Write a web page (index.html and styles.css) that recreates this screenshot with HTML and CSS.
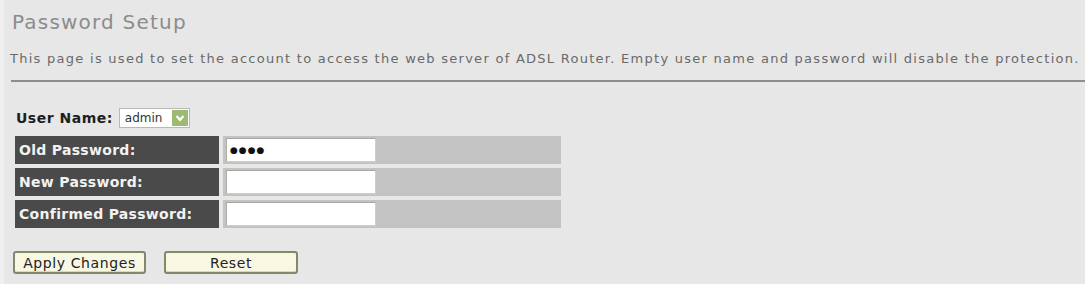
FILE: index.html
```html
<!DOCTYPE html>
<html>
<head>
<meta charset="utf-8">
<link rel="stylesheet" href="styles.css">
</head>
<body>
<div class="page">
  <h1 class="title">Password Setup</h1>
  <p class="desc">This page is used to set the account to access the web server of ADSL Router. Empty user name and password will disable the protection.</p>
  <div class="rule"></div>
  <div class="user-row">
    <span class="user-label">User Name:</span>
    <span class="select"><span class="select-text">admin</span><span class="arrow"><svg width="14" height="14" viewBox="0 0 14 14"><path d="M3.5 5 L7 8.8 L10.5 5" fill="none" stroke="#ffffff" stroke-width="2.2"/></svg></span></span>
  </div>
  <table class="form">
    <tr><td class="label">Old Password:</td><td class="field"><span class="input dots">&#9679;&#9679;&#9679;&#9679;</span></td></tr>
    <tr><td class="label">New Password:</td><td class="field"><span class="input"></span></td></tr>
    <tr><td class="label">Confirmed Password:</td><td class="field"><span class="input"></span></td></tr>
  </table>
  <div class="buttons">
    <button class="btn apply">Apply Changes</button>
    <button class="btn reset">Reset</button>
  </div>
</div>
</body>
</html>
```
FILE: styles.css
```css
html, body {
  margin: 0;
  padding: 0;
  background: #e7e7e7;
}
body {
  width: 1085px;
  height: 284px;
  overflow: hidden;
  font-family: "DejaVu Sans", Verdana, sans-serif;
}
.page {
  padding: 9px 0 0 7px;
  border-left: 4px solid #efefef;
  height: 284px;
  box-sizing: border-box;
}
.title {
  margin: 0 0 0 1px;
  font-size: 20px;
  font-weight: normal;
  color: #8c8c8c;
  line-height: 26px;
  letter-spacing: 1.2px;
}
.desc {
  margin: 16px 0 0 -1px;
  font-size: 13px;
  color: #6a6a6a;
  line-height: 16px;
  white-space: nowrap;
  letter-spacing: 1.27px;
}
.rule {
  margin-top: 13px;
  height: 2px;
  background: #8e8e8e;
}
.user-row {
  display: flex;
  align-items: center;
  margin: 26px 0 0 5px;
  height: 20px;
}
.user-label {
  font-size: 14px;
  font-weight: bold;
  color: #1e1e1e;
  letter-spacing: 0.5px;
  margin-right: 6px;
}
.select {
  display: flex;
  align-items: center;
  height: 20px;
  box-sizing: border-box;
  border: 1px solid #b8b8b8;
  background: #fff;
  padding: 0 1px 0 5px;
}
.select-text {
  font-size: 12px;
  color: #333;
  margin-right: 10px;
}
.arrow {
  display: flex;
  align-items: center;
  justify-content: center;
  width: 16px;
  height: 16px;
  background: #9cbb70;
}
.form {
  border-spacing: 4px 4px;
  margin: 4px 0 0 0;
}
.form td {
  height: 28px;
  padding: 0;
}
.label {
  width: 200px;
  background: #4a4a4a;
  color: #f2f2f2;
  font-size: 14px;
  font-weight: bold;
  letter-spacing: 0.3px;
  padding-left: 4px !important;
}
.field {
  width: 338px;
  background: #c3c3c3;
}
.input {
  display: block;
  margin-left: 3px;
  width: 150px;
  height: 24px;
  box-sizing: border-box;
  background: #fff;
  border: 1px solid #d0d0c0;
  border-top-color: #a8a8a0;
  border-left-color: #b0b0a8;
  font-size: 9px;
  line-height: 22px;
  color: #111;
  padding-left: 3px;
  letter-spacing: 1px;
}
.buttons {
  display: flex;
  gap: 18px;
  margin: 19px 0 0 2px;
}
.btn {
  height: 23px;
  background: #f7f7e2;
  border: 2px solid #85876a;
  border-radius: 3px;
  font-family: "DejaVu Sans", Verdana, sans-serif;
  font-size: 14px;
  letter-spacing: 0.6px;
  color: #222;
  padding: 0 7px;
  box-shadow: inset 0 -1px 0 #d9d9c2;
}
.apply {
  width: 133px;
}
.reset {
  width: 134px;
}
```
